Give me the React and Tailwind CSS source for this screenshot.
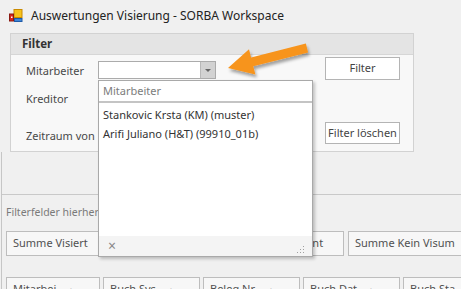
import React from "react";

const font = { fontFamily: '"Noto Sans", "Open Sans", sans-serif' };

function AppIcon() {
  return (
    <svg width="14" height="14" viewBox="0 0 14 14">
      <rect x="5" y="0.5" width="8" height="8" fill="#f7c21b" stroke="#c98a00" strokeWidth="1" />
      <rect x="0.5" y="5" width="4" height="7" fill="#d8261b" stroke="#8a1a12" strokeWidth="1" />
      <rect x="2" y="7.5" width="1.5" height="1.5" fill="#fff" />
      <rect x="5.5" y="9.5" width="7.5" height="3" fill="#3f86d6" stroke="#1e5aa8" strokeWidth="1" />
    </svg>
  );
}

function FieldBox({ label, className, sort }) {
  return (
    <div
      className={`h-[25px] shrink-0 border border-[#bdbdbd] bg-[#f7f7f7] flex items-center px-[6px] text-[11px] text-[#505050] overflow-hidden whitespace-nowrap ${className}`}
    >
      <span>{label}</span>
      {sort && <span className="ml-auto mr-[18px] text-[8px] text-[#606060]">▲</span>}
    </div>
  );
}

export default function App() {
  return (
    <div className="relative w-[461px] h-[289px] overflow-hidden bg-[#f0f0f0] text-[#444]" style={font}>
      {/* title bar */}
      <div className="h-[31px] flex items-center pl-[9px] gap-[8px]">
        <AppIcon />
        <span className="text-[12px] text-[#222]">Auswertungen Visierung - SORBA Workspace</span>
      </div>

      {/* filter group */}
      <div className="ml-[10px] mt-[2px] w-[404px] h-[119px] border border-[#d2d2d2] bg-[#f8f8f8] flex flex-col">
        <div className="h-[21px] shrink-0 bg-[#e4e4e4] border-b border-[#d6d6d6] flex items-center pl-[11px] text-[11.5px] font-bold text-[#333]">
          Filter
        </div>
        <div className="flex flex-1">
          <div className="w-[87px] pl-[15px] flex flex-col text-[11px] text-[#484848]">
            <span className="mt-[8px] leading-[15px]">Mitarbeiter</span>
            <span className="mt-[13px] leading-[15px]">Kreditor</span>
            <span className="mt-[22px] leading-[15px]">Zeitraum von</span>
          </div>
          <div className="mt-[6px]">
            <div className="w-[118px] h-[18px] border border-[#ababab] bg-white flex justify-end">
              <div className="w-[15px] h-full bg-[#d2d2d2] border-l border-[#b8b8b8] flex items-center justify-center">
                <div className="w-0 h-0 border-l-[3px] border-r-[3px] border-t-[3px] border-l-transparent border-r-transparent border-t-[#666]" />
              </div>
            </div>
          </div>
          <div className="ml-auto mr-[13px] flex flex-col">
            <button className="mt-[2px] w-[75px] h-[23px] border border-[#b4b4b4] bg-white text-[11px] text-[#444]">
              Filter
            </button>
            <button className="mt-[42px] w-[75px] h-[22px] border border-[#b4b4b4] bg-white text-[11px] text-[#444]">
              Filter löschen
            </button>
          </div>
        </div>
      </div>

      {/* pivot area */}
      <div className="ml-[1px] border-l border-[#c6c6c6] flex flex-col">
        <div className="h-[43px] shrink-0 border-b border-[#c9c9c9]" />
        <div className="pl-[4px] mt-[10px] text-[10.5px] text-[#7a7a7a] leading-[14px]">Filterfelder hierher</div>
        <div className="flex gap-[4px] pl-[4px] mt-[12px]">
          <FieldBox label="Summe Visiert" className="w-[112px]" />
          <FieldBox label="Summe Nicht Visiert" className="w-[108px]" />
          <FieldBox label="Summe Prozent" className="w-[110px]" />
          <FieldBox label="Summe Kein Visum" className="w-[130px]" />
        </div>
        <div className="flex gap-[3px] pl-[4px] mt-[21px]">
          <FieldBox label="Mitarbei" className="w-[94px]" sort />
          <FieldBox label="Buch Sys" className="w-[97px]" sort />
          <FieldBox label="Beleg Nr" className="w-[97px]" sort />
          <FieldBox label="Buch Dat" className="w-[97px]" sort />
          <FieldBox label="Buch Sta" className="w-[97px]" sort />
        </div>
      </div>

      {/* dropdown popup */}
      <div className="absolute left-[98px] top-[80px] w-[215px] h-[177px] border border-[#a9a9a9] bg-white shadow-[2px_2px_3px_rgba(0,0,0,0.22)] flex flex-col text-[11px]">
        <div className="h-[22px] shrink-0 border-b-2 border-[#c4c4c4] flex items-center pl-[4px] text-[#7c7c7c]">Mitarbeiter</div>
        <div className="flex-1 flex flex-col pt-[3px] text-[#333]">
          <div className="h-[19px] flex items-center pl-[4px]">Stankovic Krsta (KM) (muster)</div>
          <div className="h-[19px] flex items-center pl-[4px]">Arifi Juliano (H&amp;T) (99910_01b)</div>
        </div>
        <div className="h-[20px] shrink-0 bg-[#f4f4f4] flex items-center px-[7px]">
          <span className="ml-[2px] text-[14px] leading-none text-[#888]">×</span>
          <svg className="ml-auto mt-[6px]" width="9" height="9" viewBox="0 0 9 9">
            <rect x="7" y="1" width="1" height="1" fill="#a0a0a0" />
            <rect x="4" y="4" width="1" height="1" fill="#a0a0a0" />
            <rect x="7" y="4" width="1" height="1" fill="#a0a0a0" />
            <rect x="1" y="7" width="1" height="1" fill="#a0a0a0" />
            <rect x="4" y="7" width="1" height="1" fill="#a0a0a0" />
            <rect x="7" y="7" width="1" height="1" fill="#a0a0a0" />
          </svg>
        </div>
      </div>

      {/* annotation arrow */}
      <svg className="absolute left-0 top-0 pointer-events-none" width="461" height="289">
        <defs>
          <filter id="sh" x="-20%" y="-40%" width="140%" height="180%">
            <feDropShadow dx="1.5" dy="3" stdDeviation="1.6" floodColor="#000" floodOpacity="0.35" />
          </filter>
        </defs>
        <polygon
          points="228,68 249,49.3 251.1,57.5 305.9,43.6 308.1,52.4 253.3,66.3 255.4,74.5"
          fill="#f7941d"
          filter="url(#sh)"
        />
      </svg>
    </div>
  );
}
